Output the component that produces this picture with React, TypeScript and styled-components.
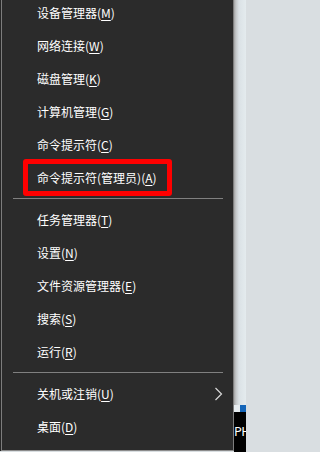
import styled, { createGlobalStyle } from 'styled-components';

const GlobalStyle = createGlobalStyle`
    html, body {
        margin: 0;
        padding: 0;
        width: 246px;
        height: 452px;
        overflow: hidden;
        background: #d9dee1;
    }
    * {
        box-sizing: border-box;
    }
`;

const Page = styled.div`
    display: flex;
    width: 246px;
    height: 452px;
    background: #d9dee1;
`;

const MenuColumn = styled.div`
    width: 234px;
    height: 451px;
    padding-left: 1px;
    background: #262626;
`;

const Menu = styled.div`
    position: relative;
    height: 100%;
    background: #2b2b2b;
    border-left: 1px solid #7d7d7d;
    border-right: 1px solid #7d7d7d;
    border-bottom: 1px solid #8c8c8c;
    overflow: hidden;
    font-family: 'Noto Sans CJK SC', 'Noto Sans', sans-serif;
    font-size: 12px;
    color: #ffffff;
`;

const List = styled.ul`
    list-style: none;
    margin: -4px 0 0;
    padding: 0;
`;

const Item = styled.li`
    position: relative;
    display: flex;
    align-items: center;
    justify-content: space-between;
    height: 33px;
    padding: 0 10px 0 35px;
    line-height: 1;
    white-space: nowrap;
`;

const Key = styled.span`
    text-decoration: underline;
    text-underline-offset: 2px;
    text-decoration-thickness: 1px;
`;

const Separator = styled.li`
    height: 9px;
    display: flex;
    align-items: center;
    padding: 0 10px 0 11px;

    &::after {
        content: '';
        display: block;
        flex: 1;
        height: 1px;
        background: #808080;
    }
`;

const Highlight = styled.div`
    position: absolute;
    top: -2px;
    bottom: -2px;
    left: 21px;
    width: 149px;
    border: 5px solid #ff0000;
    border-radius: 3px;
    pointer-events: none;
`;

const Chevron = styled.svg`
    width: 9px;
    height: 14px;
    display: block;
`;

const Strip = styled.div`
    display: flex;
    flex-direction: column;
    width: 12px;
    height: 452px;
`;

const StripTop = styled.div`
    height: 405px;
    background: linear-gradient(to right, #a3a3a3 0, #c4c7c9 2px, #dbe2e6 5px, #e4ebee 100%);
`;

const StripBand = styled.div`
    display: flex;
    height: 7px;
    background: #e6ecf0;
`;

const BlueMark = styled.div`
    margin-left: auto;
    width: 6px;
    background: #1565b8;
`;

const StripBottom = styled.div`
    flex: 1;
    background: #000000;
    color: #ffffff;
    font-family: 'Noto Sans', 'Liberation Sans', sans-serif;
    font-size: 13px;
    line-height: 1;
    padding-top: 13px;
    overflow: hidden;
    white-space: nowrap;
    letter-spacing: -0.5px;
`;

type Entry = { label: string; key: string; highlight?: boolean; submenu?: boolean } | 'sep';

const entries: Entry[] = [
    { label: '设备管理器', key: 'M' },
    { label: '网络连接', key: 'W' },
    { label: '磁盘管理', key: 'K' },
    { label: '计算机管理', key: 'G' },
    { label: '命令提示符', key: 'C' },
    { label: '命令提示符(管理员)', key: 'A', highlight: true },
    'sep',
    { label: '任务管理器', key: 'T' },
    { label: '设置', key: 'N' },
    { label: '文件资源管理器', key: 'E' },
    { label: '搜索', key: 'S' },
    { label: '运行', key: 'R' },
    'sep',
    { label: '关机或注销', key: 'U', submenu: true },
    { label: '桌面', key: 'D' },
];

const App = () => {
    return (
        <>
            <GlobalStyle />
            <Page>
                <MenuColumn>
                    <Menu>
                        <List>
                            {entries.map((e, i) => {
                                if (e === 'sep') return <Separator key={i} />;
                                return (
                                    <Item key={i}>
                                        <span>
                                            {e.label}(<Key>{e.key}</Key>)
                                        </span>
                                        {e.submenu && (
                                            <Chevron viewBox="0 0 9 14">
                                                <polyline
                                                    points="1.5,1 7.5,7 1.5,13"
                                                    fill="none"
                                                    stroke="#d8d8d8"
                                                    strokeWidth="1.2"
                                                />
                                            </Chevron>
                                        )}
                                        {e.highlight && <Highlight />}
                                    </Item>
                                );
                            })}
                        </List>
                    </Menu>
                </MenuColumn>
                <Strip>
                    <StripTop />
                    <StripBand>
                        <BlueMark />
                    </StripBand>
                    <StripBottom>PH</StripBottom>
                </Strip>
            </Page>
        </>
    );
};

export default App;
